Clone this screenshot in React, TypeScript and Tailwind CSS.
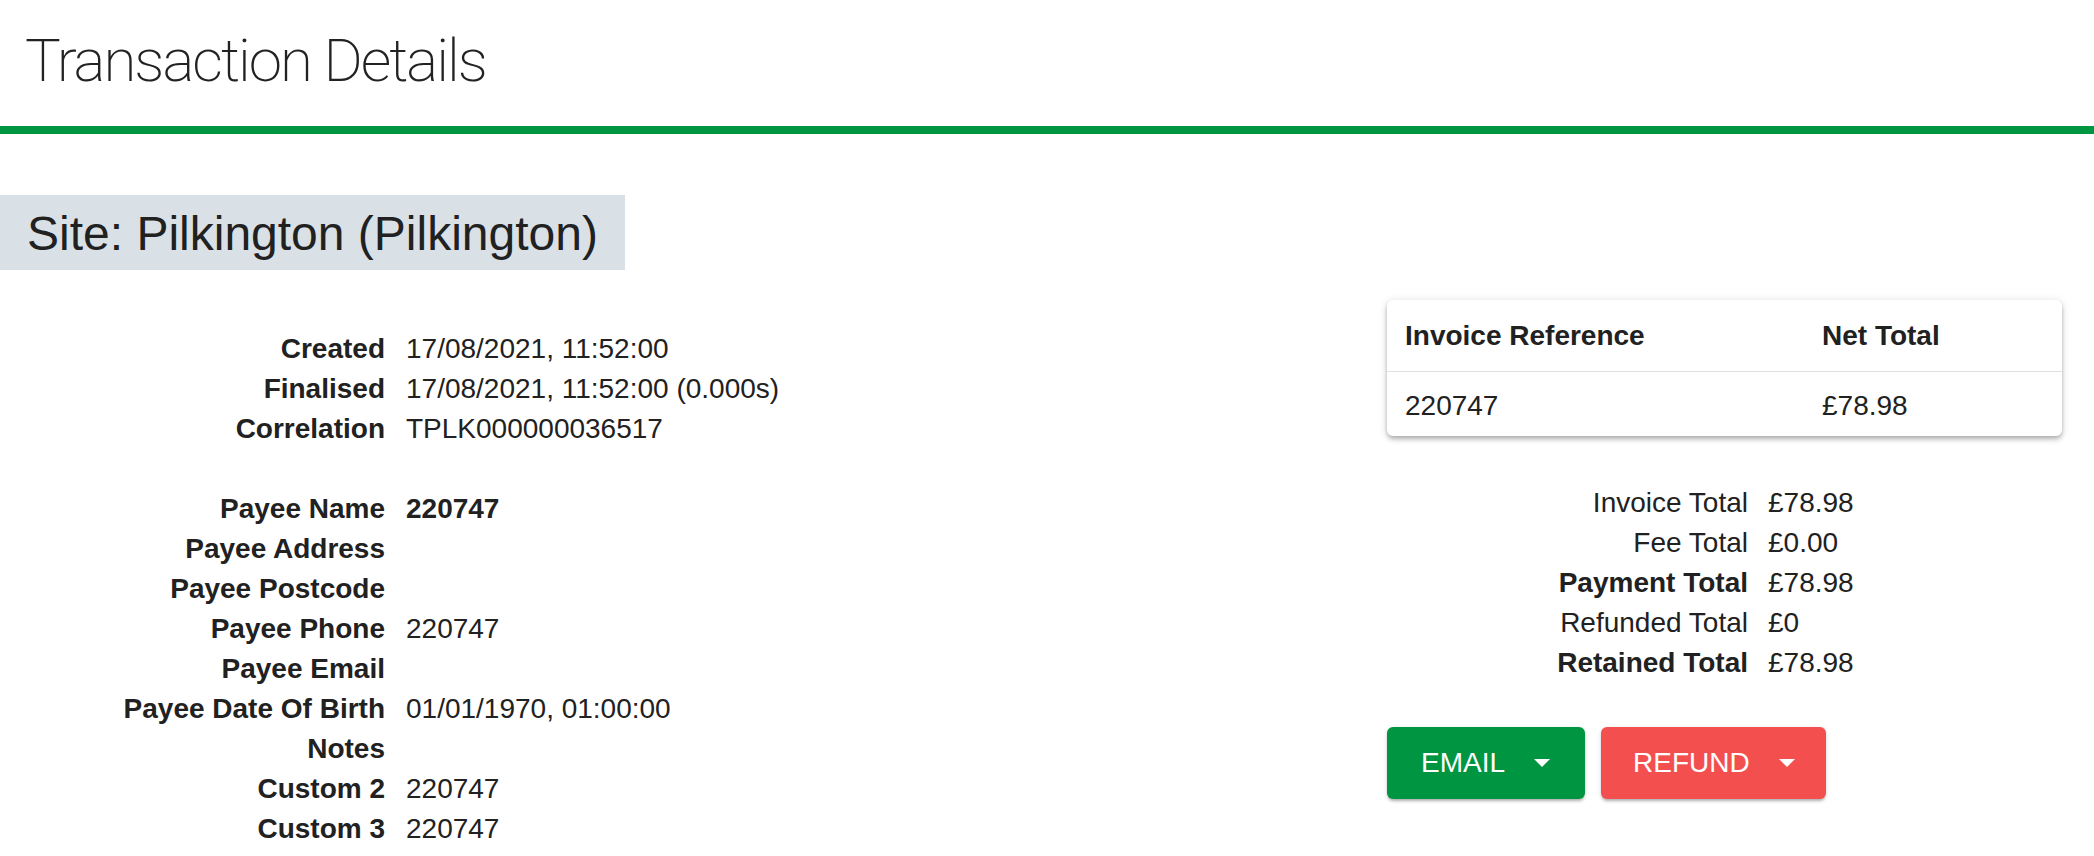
import React from 'react'

// Transaction details page: title bar, site banner, detail list + invoice summary

const DETAILS_TOP = [
  { label: 'Created',     value: '17/08/2021, 11:52:00' },
  { label: 'Finalised',   value: '17/08/2021, 11:52:00 (0.000s)' },
  { label: 'Correlation', value: 'TPLK000000036517' },
]

const DETAILS_PAYEE = [
  { label: 'Payee Name',          value: '220747', bold: true },
  { label: 'Payee Address',       value: '' },
  { label: 'Payee Postcode',      value: '' },
  { label: 'Payee Phone',         value: '220747' },
  { label: 'Payee Email',         value: '' },
  { label: 'Payee Date Of Birth', value: '01/01/1970, 01:00:00' },
  { label: 'Notes',               value: '' },
  { label: 'Custom 2',            value: '220747' },
  { label: 'Custom 3',            value: '220747' },
]

const TOTALS = [
  { label: 'Invoice Total',  value: '£78.98', bold: false },
  { label: 'Fee Total',      value: '£0.00',  bold: false },
  { label: 'Payment Total',  value: '£78.98', bold: true  },
  { label: 'Refunded Total', value: '£0',     bold: false },
  { label: 'Retained Total', value: '£78.98', bold: true  },
]

function Caret() {
  return (
    <svg width="16" height="8" viewBox="0 0 16 8" className="shrink-0">
      <path d="M0 0 L16 0 L8 8 Z" fill="#fff" />
    </svg>
  )
}

function DetailRows({ rows }: { rows: { label: string; value: string; bold?: boolean }[] }) {
  return (
    <div className="grid grid-cols-[385px_auto] gap-x-[21px] leading-[40px]">
      {rows.map(r => (
        <React.Fragment key={r.label}>
          <span className="text-right font-bold">{r.label}</span>
          <span className={r.bold ? 'font-bold' : ''}>{r.value || '\u00a0'}</span>
        </React.Fragment>
      ))}
    </div>
  )
}

export default function App() {
  return (
    <div className="w-[2094px] h-[856px] overflow-hidden bg-white text-[#212121] font-['Liberation_Sans',Arial,sans-serif] text-[28px]">

      {/* ── Title ── */}
      <div className="h-[126px] pt-[26px] pl-[25px]">
        <h1 className="font-['Roboto',sans-serif] font-extralight text-[60px] leading-[70px] tracking-[-2px] text-[#222]">
          Transaction Details
        </h1>
      </div>
      <div className="h-[8px] bg-[#009540]" />

      {/* ── Site banner ── */}
      <div className="mt-[61px] w-[625px] h-[75px] pl-[27px] bg-[#d9e1e7] text-[48px] leading-[78px]">
        Site: Pilkington (Pilkington)
      </div>

      <div className="mt-[30px] flex justify-between">

        {/* ── Left: details ── */}
        <div className="pt-[29px] flex flex-col gap-[40px]">
          <DetailRows rows={DETAILS_TOP} />
          <DetailRows rows={DETAILS_PAYEE} />
        </div>

        {/* ── Right: invoices + totals ── */}
        <div className="w-[675px] mr-[32px] flex flex-col">
          <div className="rounded-[6px] bg-white shadow-[0_2px_4px_-1px_rgba(0,0,0,0.2),0_4px_5px_0_rgba(0,0,0,0.14),0_1px_10px_0_rgba(0,0,0,0.12)]">
            <div className="grid grid-cols-[417px_1fr] h-[72px] items-center px-[18px] border-b border-[#e0e0e0] font-bold leading-[40px]">
              <span>Invoice Reference</span>
              <span>Net Total</span>
            </div>
            <div className="grid grid-cols-[417px_1fr] h-[64px] pt-[14px] px-[18px] leading-[40px]">
              <span>220747</span>
              <span>£78.98</span>
            </div>
          </div>

          <div className="mt-[47px] grid grid-cols-[361px_auto] gap-x-[20px] leading-[40px]">
            {TOTALS.map(t => (
              <React.Fragment key={t.label}>
                <span className={`text-right ${t.bold ? 'font-bold' : ''}`}>{t.label}</span>
                <span>{t.value}</span>
              </React.Fragment>
            ))}
          </div>

          <div className="mt-[44px] flex gap-[16px] text-white leading-[40px]">
            <button className="w-[198px] h-[72px] pl-[34px] flex items-center gap-[29px] rounded-[6px] bg-[#009540] shadow-[0_3px_3px_-1px_rgba(0,0,0,0.25),0_1px_5px_rgba(0,0,0,0.12)]">
              <span>EMAIL</span>
              <Caret />
            </button>
            <button className="w-[225px] h-[72px] pl-[32px] flex items-center gap-[29px] rounded-[6px] bg-[#f44f4f] shadow-[0_3px_3px_-1px_rgba(0,0,0,0.25),0_1px_5px_rgba(0,0,0,0.12)]">
              <span>REFUND</span>
              <Caret />
            </button>
          </div>
        </div>
      </div>
    </div>
  )
}
